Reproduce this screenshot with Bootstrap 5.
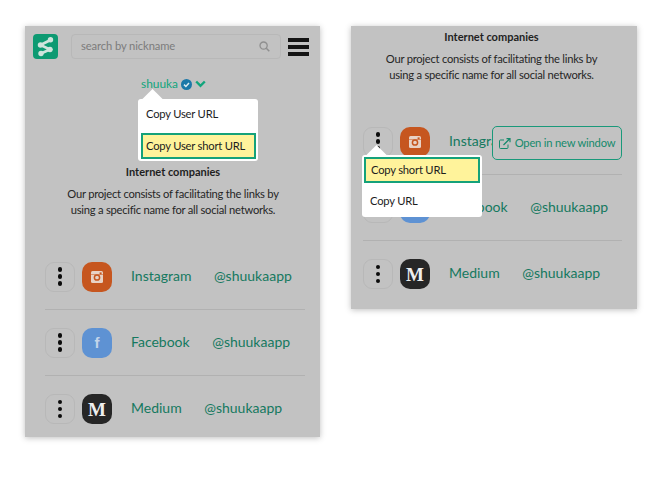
<!DOCTYPE html>
<html lang="en">
<head>
<meta charset="utf-8">
<title>shuuka</title>
<link href="https://cdn.jsdelivr.net/npm/bootstrap@5.3.0/dist/css/bootstrap.min.css" rel="stylesheet">
<style>
html,body{background:#fff;margin:0;height:480px;overflow:hidden}
body{font-family:Lato,"Open Sans",sans-serif;font-size:12px;color:#222}
.stage{padding-top:26px;padding-left:25px;gap:31px;align-items:flex-start}
.phone{background:#c2c2c2;box-shadow:0 1px 6px rgba(0,0,0,.25);position:relative;overflow:hidden}
.phone-a{width:295px;height:411px;padding:8px 12px 0 8px}
.phone-b{width:286px;height:283px;padding:3px 15px 0 12px}
.logo-box{width:25px;height:25px;background:#0d9a72;border-radius:4px;flex:none}
.find-box{width:210px;height:25px;margin-left:13px;border:1px solid #b8b8b8;border-radius:4px;padding:0 10px 0 9px;color:#7c7c7c;font-size:11.2px;letter-spacing:-.1px;flex:none}
.burger{width:21px;margin-left:7px;gap:3px;flex:none}
.burger span{height:4px;background:#141414;display:block}
.user-line{margin-top:14px;height:22px;margin-left:108px;color:#11a57c;font-size:11.9px;gap:3px}
.title-a{margin-top:69px;padding-left:5px}
.title-line{font-weight:700;font-size:11px;line-height:16px;text-align:center;color:#1f1f1f}
.blurb{font-size:11.2px;letter-spacing:-.25px;line-height:16px;text-align:center;margin:6px 0 0;color:#262626;white-space:nowrap}
.blurb-a{padding-left:5px}
.blurb-b,.title-b{padding-right:2px}
.rows-a{margin:26px 3px 0 12px}
.rows-b{margin-top:26px}
.link-row{height:66px;border-bottom:1px solid #b1b1b1;white-space:nowrap}
.link-row:last-child{border-bottom:0}
.more-btn{width:30px;height:30px;border:1px solid #b8b8b8;border-radius:9px;flex:none;gap:2.5px}
.more-btn i{width:4.5px;height:4.5px;border-radius:50%;background:#0b0b0b;display:block}
.soc{width:30px;height:30px;border-radius:10px;margin-left:7px;flex:none;color:#ddd}
.soc-ig{background:#c6561f}
.soc-fb{background:#5e92d3}
.soc-md{background:#262626}
.soc-f{font-family:"Liberation Sans",sans-serif;font-weight:700;font-size:15px;line-height:1;color:#c3d5ea}
.soc-m{font-family:"Liberation Serif",serif;font-weight:700;font-size:19px;line-height:1;color:#eee}
.net{margin-left:19px;font-size:14px;color:#15795f;padding-bottom:3px}
.handle{margin-left:22.5px;font-size:14px;color:#15795f;padding-bottom:3px}
.pop{position:absolute;width:120px;height:62px;background:#fff;border-radius:3px;z-index:3;font-size:11.2px;letter-spacing:-.2px;color:#1d1d1d}
.pop::before{content:"";position:absolute;width:15px;height:15px;background:#fff;transform:rotate(45deg)}
.pop-a{left:113px;top:73px}
.pop-a::before{left:7px;top:-7px}
.pop-b{left:11px;top:129px}
.pop-b::before{left:7px;top:-7px}
.pop-item{height:31px;padding-left:8px;position:relative;white-space:nowrap}
.pop-hot{height:26px;margin:3px 2px 2px 3px;padding-left:3px;background:#fff39b;border:2px solid #15a27a}
.pop-b .pop-hot{margin:2px 2px 3px 2px;padding-left:5px}
.ext-btn{position:absolute;left:141px;top:100px;width:130px;height:34px;background:#c2c2c2;border:1px solid #19997a;border-radius:5px;color:#158a6c;font-size:11.2px;letter-spacing:-.2px;gap:4px;z-index:2;white-space:nowrap}
</style>
</head>
<body>
<div class="stage d-flex">
  <section class="phone phone-a">
    <div class="d-flex align-items-center">
      <div class="logo-box d-flex align-items-center justify-content-center">
        <svg width="19" height="21" viewBox="0 0 19 21"><path d="M14.5 4 4.5 9 14 13.5 5 17.5" fill="none" stroke="#cfe4dc" stroke-width="2.6"/><circle cx="14.5" cy="3.8" r="2.7" fill="#cfe4dc"/><circle cx="4.5" cy="9" r="2.7" fill="#cfe4dc"/><circle cx="14" cy="13.5" r="2.7" fill="#cfe4dc"/><circle cx="5" cy="17.5" r="2.7" fill="#cfe4dc"/></svg>
      </div>
      <div class="find-box d-flex align-items-center justify-content-between">
        <span>search by nickname</span>
        <svg width="11" height="11" viewBox="0 0 11 11"><circle cx="4.6" cy="4.6" r="3.6" fill="none" stroke="#8f8f8f" stroke-width="1.3"/><path d="m7.3 7.3 3 3" stroke="#8f8f8f" stroke-width="1.5"/></svg>
      </div>
      <div class="burger d-flex flex-column"><span></span><span></span><span></span></div>
    </div>
    <div class="user-line d-flex align-items-center">
      <span>shuuka</span>
      <svg width="11" height="11" viewBox="0 0 11 11"><circle cx="5.5" cy="5.5" r="5.5" fill="#1b78a8"/><path d="m3 5.6 1.9 1.9L8 4" fill="none" stroke="#dcecf2" stroke-width="1.5"/></svg>
      <svg width="11" height="8" viewBox="0 0 11 8"><path d="m1.2 1.5 4.3 4.3 4.3-4.3" fill="none" stroke="#11a57c" stroke-width="2.4"/></svg>
    </div>
    <div class="pop pop-a">
      <div class="pop-item d-flex align-items-center">Copy User URL</div>
      <div class="pop-item pop-hot d-flex align-items-center">Copy User short URL</div>
    </div>
    <div class="title-line title-a">Internet companies</div>
    <p class="blurb blurb-a">Our project consists of facilitating the links by<br>using a specific name for all social networks.</p>
    <div class="rows-a">
      <div class="link-row d-flex align-items-center">
        <div class="more-btn d-flex flex-column align-items-center justify-content-center"><i></i><i></i><i></i></div>
        <div class="soc soc-ig d-flex align-items-center justify-content-center"><svg width="12" height="12" viewBox="0 0 12 12"><rect width="12" height="12" rx="1.5" fill="#e8d2c6"/><circle cx="6" cy="6.5" r="2.6" fill="none" stroke="#c6561f" stroke-width="1.5"/><rect x="8.6" y="1.4" width="2" height="2" fill="#c6561f"/><rect y="3" width="12" height="1" fill="#c6561f" opacity=".5"/></svg></div>
        <span class="net">Instagram</span><span class="handle">@shuukaapp</span>
      </div>
      <div class="link-row d-flex align-items-center">
        <div class="more-btn d-flex flex-column align-items-center justify-content-center"><i></i><i></i><i></i></div>
        <div class="soc soc-fb d-flex align-items-center justify-content-center"><span class="soc-f">f</span></div>
        <span class="net">Facebook</span><span class="handle">@shuukaapp</span>
      </div>
      <div class="link-row d-flex align-items-center">
        <div class="more-btn d-flex flex-column align-items-center justify-content-center"><i></i><i></i><i></i></div>
        <div class="soc soc-md d-flex align-items-center justify-content-center"><span class="soc-m">M</span></div>
        <span class="net">Medium</span><span class="handle">@shuukaapp</span>
      </div>
    </div>
  </section>
  <section class="phone phone-b">
    <div class="title-line title-b">Internet companies</div>
    <p class="blurb blurb-b">Our project consists of facilitating the links by<br>using a specific name for all social networks.</p>
    <div class="pop pop-b">
      <div class="pop-item pop-hot d-flex align-items-center">Copy short URL</div>
      <div class="pop-item d-flex align-items-center">Copy URL</div>
    </div>
    <div class="ext-btn d-flex align-items-center justify-content-center">
      <svg width="12" height="11" viewBox="0 0 12 11"><path d="M9 6.5V9.5a1 1 0 0 1-1 1H1.5a1 1 0 0 1-1-1V3a1 1 0 0 1 1-1H5" fill="none" stroke="#158a6c" stroke-width="1"/><path d="M4.5 7 10.5 1M7.5.7h3.5v3.5" fill="none" stroke="#158a6c" stroke-width="1.2"/></svg>
      <span>Open in new window</span>
    </div>
    <div class="rows-b">
      <div class="link-row d-flex align-items-center">
        <div class="more-btn d-flex flex-column align-items-center justify-content-center"><i></i><i></i><i></i></div>
        <div class="soc soc-ig d-flex align-items-center justify-content-center"><svg width="12" height="12" viewBox="0 0 12 12"><rect width="12" height="12" rx="1.5" fill="#e8d2c6"/><circle cx="6" cy="6.5" r="2.6" fill="none" stroke="#c6561f" stroke-width="1.5"/><rect x="8.6" y="1.4" width="2" height="2" fill="#c6561f"/><rect y="3" width="12" height="1" fill="#c6561f" opacity=".5"/></svg></div>
        <span class="net">Instagram</span><span class="handle">@shuukaapp</span>
      </div>
      <div class="link-row d-flex align-items-center">
        <div class="more-btn d-flex flex-column align-items-center justify-content-center"><i></i><i></i><i></i></div>
        <div class="soc soc-fb d-flex align-items-center justify-content-center"><span class="soc-f">f</span></div>
        <span class="net">Facebook</span><span class="handle">@shuukaapp</span>
      </div>
      <div class="link-row d-flex align-items-center">
        <div class="more-btn d-flex flex-column align-items-center justify-content-center"><i></i><i></i><i></i></div>
        <div class="soc soc-md d-flex align-items-center justify-content-center"><span class="soc-m">M</span></div>
        <span class="net">Medium</span><span class="handle">@shuukaapp</span>
      </div>
    </div>
  </section>
</div>
</body>
</html>
